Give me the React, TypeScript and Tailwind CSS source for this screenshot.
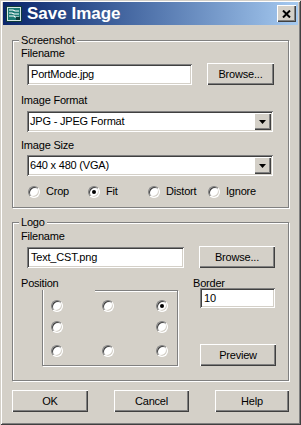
import type { ReactNode } from 'react'

const raised = 'bg-[#d4d0c8] shadow-[inset_1px_1px_0_#ffffff,inset_-1px_-1px_0_#404040,inset_-2px_-2px_0_#808080]'
const sunken = 'shadow-[inset_1px_1px_0_#808080,inset_-1px_-1px_0_#ffffff,inset_2px_2px_0_#404040,inset_-2px_-2px_0_#d4d0c8]'
const etched = 'border border-[#808080] shadow-[inset_1px_1px_0_#ffffff,1px_1px_0_#ffffff]'

function Button({ label, className = '' }: { label: string; className?: string }) {
  return <div className={`${raised} flex h-[22px] items-center justify-center ${className}`}>{label}</div>
}

function TextBox({ value, className = '' }: { value: string; className?: string }) {
  return <div className={`${sunken} flex items-center bg-white pl-[4px] ${className}`}>{value}</div>
}

function Select({ value }: { value: string }) {
  return (
    <div className={`${sunken} ml-[15px] flex h-[21px] w-[246px] items-center bg-white p-[2px]`}>
      <span className="flex-1 pl-[1px]">{value}</span>
      <div className={`${raised} flex h-[17px] w-[17px] items-center justify-center`}>
        <svg width="7" height="4" viewBox="0 0 7 4">
          <path d="M0 0h7L3.5 4z" fill="#000" />
        </svg>
      </div>
    </div>
  )
}

function Radio({ checked = false }: { checked?: boolean }) {
  return (
    <div className="flex h-[12px] w-[12px] shrink-0 items-center justify-center rounded-full border border-t-[#808080] border-l-[#808080] border-b-white border-r-white bg-white shadow-[inset_1px_1px_0_#404040,inset_-1px_-1px_0_#d4d0c8]">
      {checked && <div className="h-[4px] w-[4px] rounded-full bg-black" />}
    </div>
  )
}

function Group({ title, height, children }: { title: string; height: string; children: ReactNode }) {
  return (
    <div className={`relative ${etched} ${height}`}>
      <span className="absolute left-[6px] top-[-7px] bg-[#d4d0c8] px-[2px] leading-[13px]">{title}</span>
      {children}
    </div>
  )
}

function AppIcon() {
  return (
    <svg width="16" height="16" viewBox="0 0 16 16">
      <rect x="0.5" y="0.5" width="15" height="15" fill="#d8e8e4" stroke="#0e3c3a" />
      <rect x="2" y="2" width="12" height="12" fill="#1d7a74" />
      <path d="M3 4h4l2 1h4M3 7h3l2 1h5M3 10h5l1 1h4" stroke="#ffffff" strokeWidth="1.2" fill="none" />
      <rect x="10" y="11" width="4" height="3" fill="#0e3c3a" />
    </svg>
  )
}

export default function App() {
  const positions = [true, true, true, true, false, true, true, true, true]
  return (
    <div
      className="h-[425px] w-[301px] bg-[#d4d0c8] p-[3px] text-[11px] leading-[13px] tracking-[-0.2px] text-black shadow-[inset_1px_1px_0_#d4d0c8,inset_-1px_-1px_0_#404040,inset_2px_2px_0_#ffffff,inset_-2px_-2px_0_#808080]"
      style={{ fontFamily: '"Liberation Sans", Arial, sans-serif' }}
    >
      <div className="-mt-px flex h-[23px] items-center bg-gradient-to-r from-[#0a246a] to-[#a6caf0] pl-[3px] pr-[2px]">
        <AppIcon />
        <span className="ml-[5px] flex-1 text-[17px] font-bold leading-[20px] tracking-normal text-white">Save Image</span>
        <div className={`${raised} flex h-[17px] w-[19px] items-center justify-center`}>
          <svg width="9" height="8" viewBox="0 0 9 8">
            <path d="M1 0.5l7 7M8 0.5l-7 7" stroke="#000" strokeWidth="2" />
          </svg>
        </div>
      </div>

      <div className="ml-[9px] w-[277px]">
        <div className="mt-[15px]">
          <Group title="Screenshot" height="h-[168px]">
            <div className="ml-[8px] mt-[6px]">Filename</div>
            <div className="mt-[3px] flex items-center">
              <TextBox value="PortMode.jpg" className="ml-[14px] h-[21px] w-[165px]" />
              <Button label="Browse..." className="ml-[15px] w-[67px]" />
            </div>
            <div className="ml-[8px] mt-[9px]">Image Format</div>
            <div className="mt-[4px] -ml-px">
              <Select value="JPG - JPEG Format" />
            </div>
            <div className="ml-[8px] mt-[7px]">Image Size</div>
            <div className="mt-[3px] -ml-px">
              <Select value="640 x 480 (VGA)" />
            </div>
            <div className="ml-[15px] mt-[9px] flex">
              {['Crop', 'Fit', 'Distort', 'Ignore'].map((item) => (
                <div key={item} className="flex w-[60px] items-center gap-[6px]">
                  <Radio checked={item === 'Fit'} />
                  <span>{item}</span>
                </div>
              ))}
            </div>
          </Group>
        </div>

        <div className="mt-[14px]">
          <Group title="Logo" height="h-[159px]">
            <div className="ml-[8px] mt-[7px]">Filename</div>
            <div className="mt-[3px] flex items-center">
              <TextBox value="Text_CST.png" className="ml-[14px] h-[21px] w-[157px]" />
              <Button label="Browse..." className="ml-[15px] w-[76px]" />
            </div>
            <div className="ml-[8px] mt-[9px] flex">
              <div className="w-[172px]">
                <div>Position</div>
                <div className="ml-[21px] h-[76px] w-[136px] border-b border-l border-r border-[#808080] shadow-[inset_1px_0_0_#ffffff,1px_1px_0_#ffffff]">
                  <div className="ml-[52px] h-[2px] border-t border-[#808080] bg-[#d4d0c8] shadow-[inset_0_1px_0_#ffffff]" />
                  <div className="ml-[8px] mt-[8px] grid grid-cols-[51px_54px_12px] grid-rows-[21px_24px_12px]">
                    {positions.map((visible, index) => (
                      <div key={index}>{visible && <Radio checked={index === 2} />}</div>
                    ))}
                  </div>
                </div>
              </div>
              <div className="flex flex-col">
                <div className="h-[11px]">Border</div>
                <TextBox value="10" className="ml-[7px] h-[20px] w-[75px]" />
                <Button label="Preview" className="ml-[7px] mt-[36px] w-[76px]" />
              </div>
            </div>
          </Group>
        </div>

        <div className="mt-[9px] flex justify-between">
          <Button label="OK" className="w-[76px]" />
          <Button label="Cancel" className="w-[75px]" />
          <Button label="Help" className="w-[74px]" />
        </div>
      </div>
    </div>
  )
}
